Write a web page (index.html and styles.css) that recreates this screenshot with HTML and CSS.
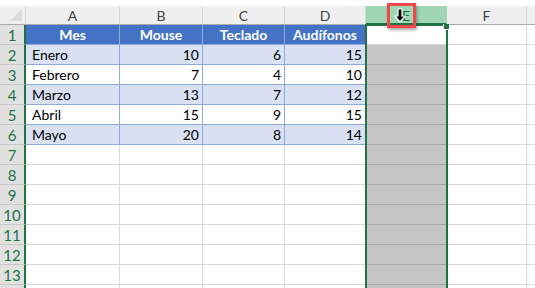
FILE: index.html
```html
<!DOCTYPE html>
<html lang="es">

<head>
    <meta charset="UTF-8">
    <meta name="viewport" content="width=device-width, initial-scale=1.0">
    <title>Hoja</title>
    <link rel="stylesheet" href="styles.css">
</head>

<body>
    <div id="book">
        <div class="sheet">
            <!-- cabecera de columnas -->
            <div class="corner"><span class="tri"></span></div>
            <div class="colhead">A</div>
            <div class="colhead">B</div>
            <div class="colhead">C</div>
            <div class="colhead">D</div>
            <div class="colhead sel">E</div>
            <div class="colhead">F</div>
            <div class="colhead"></div>

            <!-- fila 1 -->
            <div class="rowhead">1</div>
            <div class="cell th">Mes</div>
            <div class="cell th">Mouse</div>
            <div class="cell th">Teclado</div>
            <div class="cell th">Audífonos</div>
            <div class="cell active"></div>
            <div class="cell"></div>
            <div class="cell"></div>

            <!-- fila 2 -->
            <div class="rowhead">2</div>
            <div class="cell tb band">Enero</div>
            <div class="cell tb band num">10</div>
            <div class="cell tb band num">6</div>
            <div class="cell tb band num">15</div>
            <div class="cell pick"></div>
            <div class="cell"></div>
            <div class="cell"></div>

            <!-- fila 3 -->
            <div class="rowhead">3</div>
            <div class="cell tb">Febrero</div>
            <div class="cell tb num">7</div>
            <div class="cell tb num">4</div>
            <div class="cell tb num">10</div>
            <div class="cell pick"></div>
            <div class="cell"></div>
            <div class="cell"></div>

            <!-- fila 4 -->
            <div class="rowhead">4</div>
            <div class="cell tb band">Marzo</div>
            <div class="cell tb band num">13</div>
            <div class="cell tb band num">7</div>
            <div class="cell tb band num">12</div>
            <div class="cell pick"></div>
            <div class="cell"></div>
            <div class="cell"></div>

            <!-- fila 5 -->
            <div class="rowhead">5</div>
            <div class="cell tb">Abril</div>
            <div class="cell tb num">15</div>
            <div class="cell tb num">9</div>
            <div class="cell tb num">15</div>
            <div class="cell pick"></div>
            <div class="cell"></div>
            <div class="cell"></div>

            <!-- fila 6 -->
            <div class="rowhead">6</div>
            <div class="cell tb band">Mayo</div>
            <div class="cell tb band num">20</div>
            <div class="cell tb band num">8</div>
            <div class="cell tb band num">14</div>
            <div class="cell pick"></div>
            <div class="cell"></div>
            <div class="cell"></div>

            <div class="rowhead">7</div>
            <div class="cell"></div><div class="cell"></div><div class="cell"></div><div class="cell"></div>
            <div class="cell pick"></div><div class="cell"></div><div class="cell"></div>

            <div class="rowhead">8</div>
            <div class="cell"></div><div class="cell"></div><div class="cell"></div><div class="cell"></div>
            <div class="cell pick"></div><div class="cell"></div><div class="cell"></div>

            <div class="rowhead">9</div>
            <div class="cell"></div><div class="cell"></div><div class="cell"></div><div class="cell"></div>
            <div class="cell pick"></div><div class="cell"></div><div class="cell"></div>

            <div class="rowhead">10</div>
            <div class="cell"></div><div class="cell"></div><div class="cell"></div><div class="cell"></div>
            <div class="cell pick"></div><div class="cell"></div><div class="cell"></div>

            <div class="rowhead">11</div>
            <div class="cell"></div><div class="cell"></div><div class="cell"></div><div class="cell"></div>
            <div class="cell pick"></div><div class="cell"></div><div class="cell"></div>

            <div class="rowhead">12</div>
            <div class="cell"></div><div class="cell"></div><div class="cell"></div><div class="cell"></div>
            <div class="cell pick"></div><div class="cell"></div><div class="cell"></div>

            <div class="rowhead">13</div>
            <div class="cell"></div><div class="cell"></div><div class="cell"></div><div class="cell"></div>
            <div class="cell pick"></div><div class="cell"></div><div class="cell"></div>

            <!-- fila 14, solo asoma el borde -->
            <div class="rowhead"></div>
            <div class="cell"></div><div class="cell"></div><div class="cell"></div><div class="cell"></div>
            <div class="cell pick"></div><div class="cell"></div><div class="cell"></div>
        </div>

        <!-- borde de la selección -->
        <div class="selection"></div>
        <div class="handle"></div>

        <!-- marca roja con el cursor -->
        <div class="marker">
            <svg class="cursor" width="12" height="16" viewBox="0 0 12 16">
                <path d="M4 1 H8 V8 H11 L6 14 L1 8 H4 Z" fill="#000" stroke="#fff" stroke-width="1.2" stroke-linejoin="miter" />
            </svg>
        </div>
    </div>
</body>

</html>
```

FILE: styles.css
```css
* {
    margin: 0;
    padding: 0;
    box-sizing: border-box;
}

body {
    width: 535px;
    height: 288px;
    overflow: hidden;
    background-color: #fff;
    font-family: Lato, "Liberation Sans", sans-serif;
}

#book {
    position: relative;
    height: 288px;
    overflow: hidden;
    padding-top: 6px;
}

.sheet {
    display: grid;
    grid-template-columns: 26px 94px 83px 82px 81px 81px 80px 1fr;
    grid-template-rows: 19px;
    grid-auto-rows: 20px;
}

.corner {
    position: relative;
    background-color: #efefef;
    border-right: 1px solid #d6d6d6;
    border-bottom: 1px solid #ababab;
}

.tri {
    position: absolute;
    right: 3px;
    bottom: 3px;
    width: 0;
    height: 0;
    border-left: 12px solid transparent;
    border-bottom: 12px solid #dcdcdc;
}

.colhead {
    background-color: #efefef;
    border-right: 1px solid #d6d6d6;
    border-bottom: 1px solid #ababab;
    color: #444;
    font-size: 14px;
    text-align: center;
    line-height: 19px;
}

.colhead.sel {
    background-color: #a0d6b4;
    color: #1f6b3e;
    border-bottom: 2px solid #217346;
    border-right-color: #a0d6b4;
}

.rowhead {
    background-color: #e1e1e1;
    border-right: 2px solid #217346;
    border-bottom: 1px solid #c8c8c8;
    color: #217346;
    font-size: 15px;
    text-align: center;
    line-height: 20px;
}

.cell {
    display: flex;
    align-items: flex-end;
    padding: 0 6px 1px;
    border-right: 1px solid #d9d9d9;
    border-bottom: 1px solid #d9d9d9;
    font-size: 14px;
    color: #000;
    white-space: nowrap;
}

.cell.th {
    background-color: #4472c4;
    color: #fff;
    font-weight: bold;
    justify-content: center;
    border-right-color: #8ea9db;
    border-bottom-color: #8ea9db;
}

.cell.tb {
    border-right-color: #8ea9db;
    border-bottom-color: #8ea9db;
}

.cell.band {
    background-color: #d9e1f2;
}

.cell.num {
    justify-content: flex-end;
    padding-right: 3px;
}

.cell.pick {
    background-color: #c6c6c6;
    border-bottom-color: #a9a9a9;
}

.cell.active {
    background-color: #fff;
}

.selection {
    position: absolute;
    left: 365px;
    top: 24px;
    width: 83px;
    height: 270px;
    border: 2px solid #217346;
}

.handle {
    position: absolute;
    left: 443px;
    top: 24px;
    width: 6px;
    height: 6px;
    background-color: #217346;
    border-left: 1px solid #fff;
    border-bottom: 1px solid #fff;
}

.marker {
    position: absolute;
    left: 387px;
    top: 3px;
    width: 29px;
    height: 25px;
    border: 3px solid #f0474c;
    box-shadow: 1px 2px 3px rgba(0, 0, 0, .35);
}

.cursor {
    position: absolute;
    left: 4px;
    top: 2px;
}
```
